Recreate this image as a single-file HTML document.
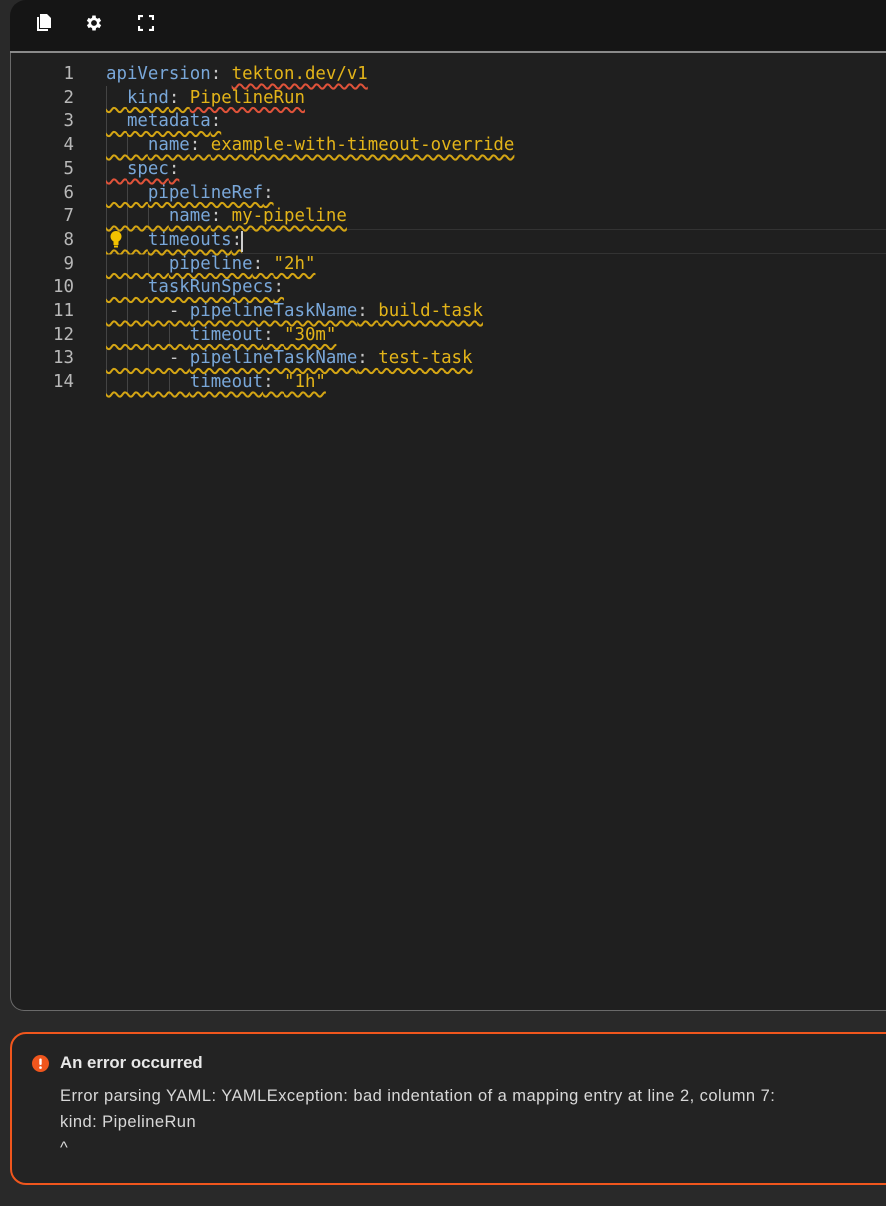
<!DOCTYPE html>
<html><head><meta charset="utf-8"><style>
*{margin:0;padding:0;box-sizing:border-box}
body{width:886px;height:1206px;background:#292929;overflow:hidden;position:relative;font-family:"Liberation Sans",sans-serif}
.tb{position:absolute;left:10px;top:0;width:900px;height:53px;background:#151515;border-top-left-radius:16px;border-bottom:2px solid #8a8a8a}
.ed{position:absolute;left:10px;top:53px;width:900px;height:958px;background:#1f1f1f;border-left:1px solid #6a6a6a;border-bottom:1px solid #6a6a6a;border-bottom-left-radius:14px}
.ln{position:absolute;left:30px;width:44px;text-align:right;font-family:"DejaVu Sans Mono",monospace;font-size:17.4px;color:#b8b8b8;line-height:23.7px}
.cd{position:absolute;left:106px;font-family:"DejaVu Sans Mono",monospace;font-size:17.4px;line-height:23.7px;white-space:pre;color:#c8c8c8}
.k{color:#79a7d9}.v{color:#e3b419}
.y{text-decoration:underline wavy #d4a514;text-decoration-thickness:1.5px;text-underline-offset:4px}
.r{text-decoration:underline wavy #e0533a;text-decoration-thickness:1.5px;text-underline-offset:4px}
.g{position:absolute;width:1px;background:#444}
.err{position:absolute;left:10px;top:1032px;width:900px;height:153px;border:2px solid #f0561d;border-radius:16px;background:#232323}
.et{position:absolute;left:60px;top:1053px;font-family:"Liberation Sans",sans-serif;font-weight:bold;font-size:16.8px;color:#e8e8e8}
.eb{position:absolute;left:60px;font-size:16.5px;letter-spacing:0.45px;color:#d8d8d8}
</style></head><body>
<div class="tb"></div>
<svg style="position:absolute;left:34px;top:13px" width="20" height="20" viewBox="0 0 20 20"><path d="M6 1h7l4 4v10H6z" fill="#fff"/><path d="M3 4h2v12h9v2H3z" fill="#fff"/></svg>
<svg style="position:absolute;left:84px;top:13px" width="20" height="20" viewBox="0 0 24 24"><path fill="#fff" d="M19.4 13a7.5 7.5 0 000-2l2.1-1.6-2-3.5-2.5 1a7.6 7.6 0 00-1.7-1L15 3h-4l-.4 2.9a7.6 7.6 0 00-1.7 1l-2.5-1-2 3.5L6.6 11a7.5 7.5 0 000 2l-2.1 1.6 2 3.5 2.5-1a7.6 7.6 0 001.7 1L11 21h4l.4-2.9a7.6 7.6 0 001.7-1l2.5 1 2-3.5zM13 15.5a3.5 3.5 0 110-7 3.5 3.5 0 010 7z" transform="translate(-1 0)"/></svg>
<svg style="position:absolute;left:138px;top:15px" width="16" height="16" viewBox="0 0 16 16" fill="none" stroke="#fff" stroke-width="2.2"><path d="M1 5V1h4M11 1h4v4M15 11v4h-4M5 15H1v-4"/></svg>
<div class="ed"></div>
<div style="position:absolute;left:106px;top:229px;width:790px;height:25px;border-top:1px solid #333;border-bottom:1px solid #333"></div>
<div class="g" style="left:106px;top:86px;height:308px"></div>
<div class="g" style="left:127px;top:134px;height:24px"></div>
<div class="g" style="left:127px;top:181px;height:213px"></div>
<div class="g" style="left:148px;top:205px;height:24px"></div>
<div class="g" style="left:148px;top:253px;height:24px"></div>
<div class="g" style="left:148px;top:300px;height:94px"></div>
<div class="g" style="left:169px;top:324px;height:24px"></div>
<div class="g" style="left:169px;top:371px;height:24px"></div>
<div class="ln" style="top:63px">1<br>2<br>3<br>4<br>5<br>6<br>7<br>8<br>9<br>10<br>11<br>12<br>13<br>14</div>
<div class="cd" style="top:63px"><span class="k">apiVersion</span>: <span class="v r">tekton.dev/v1</span>
<span class="y">  <span class="k">kind</span>: </span><span class="v r">PipelineRun</span>
<span class="y">  <span class="k">metadata</span>:</span>
<span class="y">    <span class="k">name</span>: <span class="v">example-with-timeout-override</span></span>
<span class="r">  <span class="k">spec</span>:</span>
<span class="y">    <span class="k">pipelineRef</span>:</span>
<span class="y">      <span class="k">name</span>: <span class="v">my-pipeline</span></span>
<span class="y">    <span class="k">timeouts</span>:</span>
<span class="y">      <span class="k">pipeline</span>: <span class="v">"2h"</span></span>
<span class="y">    <span class="k">taskRunSpecs</span>:</span>
<span class="y">      - <span class="k">pipelineTaskName</span>: <span class="v">build-task</span></span>
<span class="y">        <span class="k">timeout</span>: <span class="v">"30m"</span></span>
<span class="y">      - <span class="k">pipelineTaskName</span>: <span class="v">test-task</span></span>
<span class="y">        <span class="k">timeout</span>: <span class="v">"1h"</span></span></div>
<div style="position:absolute;left:241px;top:231px;width:2px;height:21px;background:#ccc"></div>
<svg style="position:absolute;left:109px;top:230px" width="14" height="19" viewBox="0 0 14 19"><circle cx="7" cy="6.5" r="5.5" fill="#f2c200"/><rect x="4.5" y="10" width="5" height="5" fill="#f2c200"/><rect x="5" y="15.5" width="4" height="2" fill="#f2c200"/></svg>
<div class="err"></div>
<svg style="position:absolute;left:32px;top:1055px" width="17" height="17" viewBox="0 0 17 17"><circle cx="8.5" cy="8.5" r="8.5" fill="#f0561d"/><rect x="7.3" y="3.5" width="2.4" height="6.5" rx="1" fill="#fff"/><circle cx="8.5" cy="12.6" r="1.3" fill="#fff"/></svg>
<div class="et">An error occurred</div>
<div class="eb" style="top:1087px">Error parsing YAML: YAMLException: bad indentation of a mapping entry at line 2, column 7:</div>
<div class="eb" style="top:1113px">kind: PipelineRun</div>
<div class="eb" style="top:1139px">^</div>
</body></html>
